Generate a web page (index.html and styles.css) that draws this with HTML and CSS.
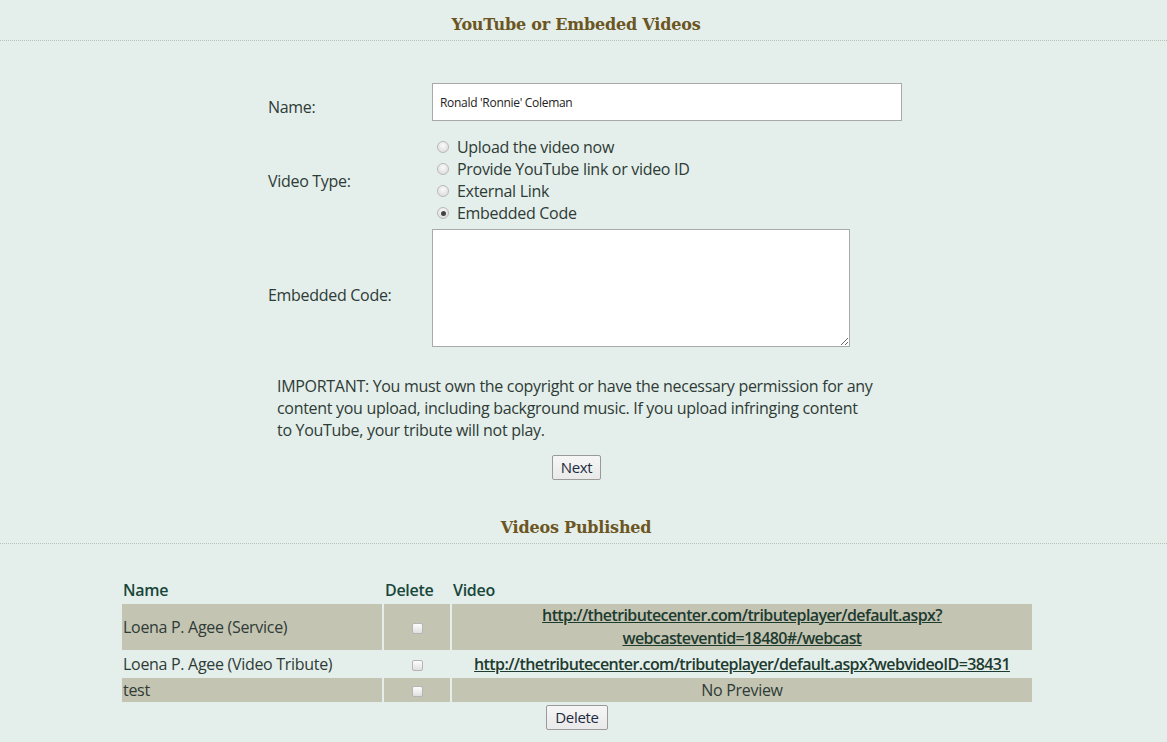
FILE: index.html
```html
<!DOCTYPE html>
<html>
<head>
<meta charset="utf-8">
<link rel="stylesheet" href="styles.css">
</head>
<body>
<div class="page">
  <h2 class="section-title">YouTube or Embeded Videos</h2>
  <div class="form">
    <div class="row row-name">
      <div class="label">Name:</div>
      <div class="field"><input class="text-input" type="text" value="Ronald 'Ronnie' Coleman"></div>
    </div>
    <div class="row row-type">
      <div class="label">Video Type:</div>
      <div class="field radios">
        <label class="radio"><input type="radio" name="vt"><span>Upload the video now</span></label>
        <label class="radio"><input type="radio" name="vt"><span>Provide YouTube link or video ID</span></label>
        <label class="radio"><input type="radio" name="vt"><span>External Link</span></label>
        <label class="radio"><input type="radio" name="vt" checked><span>Embedded Code</span></label>
      </div>
    </div>
    <div class="row row-code">
      <div class="label">Embedded Code:</div>
      <div class="field"><textarea class="code"></textarea></div>
    </div>
    <p class="notice">IMPORTANT: You must own the copyright or have the necessary permission for any content you upload, including background music. If you upload infringing content to YouTube, your tribute will not play.</p>
    <div class="actions"><button class="btn">Next</button></div>
  </div>

  <h2 class="section-title second">Videos Published</h2>
  <div class="table-wrap">
    <table class="videos">
      <thead>
        <tr><th class="c-name">Name</th><th class="c-del">Delete</th><th class="c-vid">Video</th></tr>
      </thead>
      <tbody>
        <tr class="shade tall">
          <td>Loena P. Agee (Service)</td>
          <td class="center"><input type="checkbox"></td>
          <td class="center"><a href="#">http://thetributecenter.com/tributeplayer/default.aspx?<br>webcasteventid=18480#/webcast</a></td>
        </tr>
        <tr>
          <td>Loena P. Agee (Video Tribute)</td>
          <td class="center"><input type="checkbox"></td>
          <td class="center"><a href="#">http://thetributecenter.com/tributeplayer/default.aspx?webvideoID=38431</a></td>
        </tr>
        <tr class="shade">
          <td>test</td>
          <td class="center"><input type="checkbox"></td>
          <td class="center">No Preview</td>
        </tr>
      </tbody>
    </table>
    <div class="actions"><button class="btn">Delete</button></div>
  </div>
</div>
</body>
</html>
```
FILE: styles.css
```css
html, body {
  margin: 0;
  padding: 0;
  background: #e4eeea;
}
body {
  font-family: "Open Sans", "Liberation Sans", sans-serif;
  font-size: 16px;
  line-height: 22px;
  color: #2e3b36;
}
.page {
  width: 1167px;
}
.section-title {
  margin: 0;
  padding: 15px 15px 6px 0;
  line-height: 19px;
  text-align: center;
  font-family: "DejaVu Serif", "Liberation Serif", serif;
  font-size: 16px;
  font-weight: bold;
  color: #6b5522;
  border-bottom: 1px dotted #b8c2bd;
  letter-spacing: -0.2px;
}
.section-title.second {
  margin-top: 23px;
}
.form {
  width: 634px;
  margin: 42px 0 0 268px;
}
.row {
  display: flex;
  align-items: flex-start;
}
.label {
  width: 164px;
  flex: none;
  letter-spacing: -0.3px;
}
.row-name .label { margin-top: 13px; }
.row-type { margin-top: 15px; }
.row-type .label { margin-top: 34px; }
.row-code { margin-top: 5px; }
.row-code .label { margin-top: 55px; }
.text-input {
  display: block;
  box-sizing: border-box;
  width: 470px;
  height: 38px;
  margin: 0;
  border: 1px solid #a9a9a9;
  background: #fff;
  padding: 0 7px;
  font-family: "Open Sans", sans-serif;
  font-size: 12px;
  color: #222;
  letter-spacing: -0.3px;
}
.radios {
  display: flex;
  flex-direction: column;
}
.radio {
  display: flex;
  align-items: center;
  height: 22px;
  letter-spacing: -0.3px;
}
.radio input {
  -webkit-appearance: none;
  appearance: none;
  box-sizing: border-box;
  margin: 0 8px 0 5px;
  width: 12px;
  height: 12px;
  border-radius: 50%;
  border: 1px solid #b9b9b9;
  background: radial-gradient(circle at 50% 35%, #fafafa 0%, #e2e2e2 70%, #d4d4d4 100%);
  position: relative;
}
.radio input:checked::after {
  content: "";
  position: absolute;
  left: 2.5px;
  top: 2.5px;
  width: 5px;
  height: 5px;
  border-radius: 50%;
  background: #444;
}
.code {
  display: block;
  box-sizing: border-box;
  width: 418px;
  height: 118px;
  border: 1px solid #a9a9a9;
  background: #fff;
  resize: both;
  margin: 0;
}
.notice {
  margin: 28px 0 0 9px;
  width: 597px;
  line-height: 22px;
  letter-spacing: -0.3px;
}
.actions {
  display: flex;
  justify-content: center;
}
.form .actions {
  margin-top: 14px;
  width: 617px;
}
.btn {
  font-family: "Open Sans", sans-serif;
  font-size: 15px;
  letter-spacing: -0.3px;
  color: #1c2b40;
  background: linear-gradient(#f6f6f6, #e9e9e9);
  border: 1px solid #9a9a9a;
  border-radius: 2px;
  padding: 0 8px;
  height: 25px;
  line-height: 21px;
}
.table-wrap {
  width: 910px;
  margin: 34px 0 0 122px;
}
.videos {
  border-collapse: separate;
  border-spacing: 2px;
  margin: -2px 0 0 -2px;
  width: 914px;
}
.videos th {
  text-align: left;
  font-weight: 600;
  color: #17463a;
  padding: 0 1px;
  height: 24px;
  vertical-align: middle;
  letter-spacing: -0.3px;
}
.videos td {
  padding: 0 1px;
  height: 24px;
  color: #2e3b36;
  vertical-align: middle;
  letter-spacing: -0.3px;
}
.c-name { width: 258px; }
.c-del { width: 64px; }
.videos tr.shade td {
  background: #c4c4b3;
}
.videos tr.tall td {
  height: 46px;
}
.center {
  text-align: center;
}
.videos td a {
  color: #1d3b2f;
  font-weight: 600;
  text-decoration: underline;
  letter-spacing: -0.6px;
  line-height: 23px;
}
.videos td input[type=checkbox] {
  -webkit-appearance: none;
  appearance: none;
  box-sizing: border-box;
  width: 11px;
  height: 11px;
  margin: 0;
  vertical-align: middle;
  border: 1px solid #b5b5b5;
  border-radius: 2px;
  background: linear-gradient(#fdfdfd, #e0e0e0);
}
.table-wrap .actions {
  margin-top: 1px;
}
```
